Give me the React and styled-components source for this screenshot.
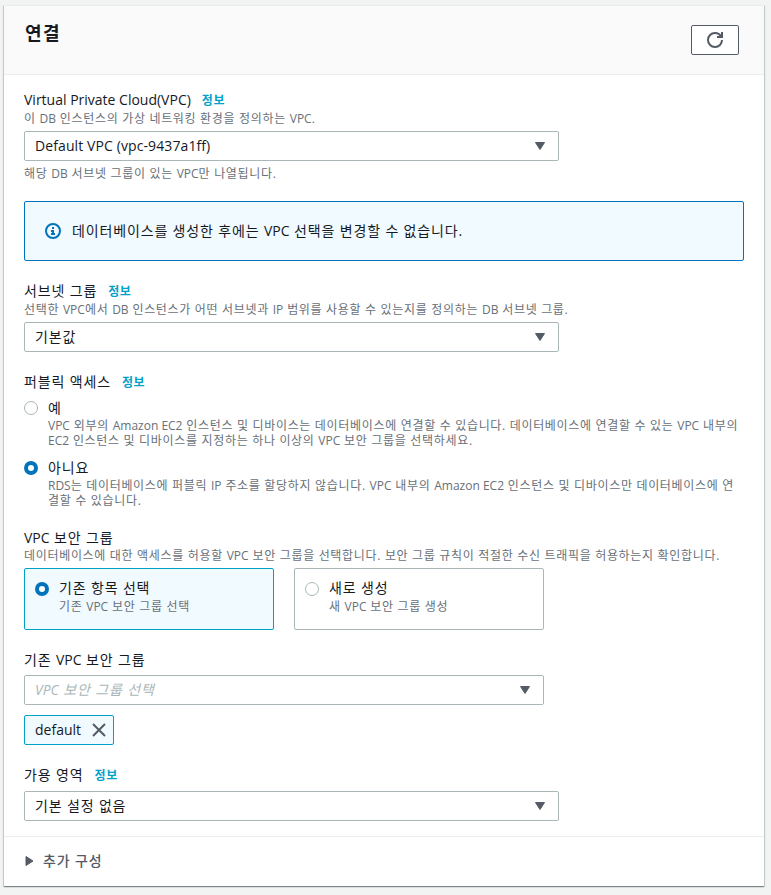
import React from 'react';
import styled, { createGlobalStyle } from 'styled-components';

const GlobalStyle = createGlobalStyle`
  * {
    box-sizing: border-box;
  }
  body {
    margin: 0;
    background: #f2f3f3;
    color: #16191f;
    font-family: 'Open Sans', 'Noto Sans CJK KR', sans-serif;
    font-size: 14px;
  }
`;

const Page = styled.main`
  padding: 5px 7px 9px 4px;
`;

const Panel = styled.section`
  width: 760px;
  height: 881px;
  background: #fff;
  border-top: 1px solid #eaeded;
  box-shadow: 0 1px 1px 0 rgba(0, 28, 36, 0.3), 1px 1px 1px 0 rgba(0, 28, 36, 0.15),
    -1px 1px 1px 0 rgba(0, 28, 36, 0.15);
`;

const PanelHeader = styled.header`
  display: flex;
  justify-content: space-between;
  height: 69px;
  padding: 15px 25px 0 21px;
  background: #fafafa;
  border-bottom: 1px solid #eaeded;
`;

const Title = styled.h2`
  margin: 0;
  font-size: 18px;
  line-height: 24px;
  font-weight: 700;
  letter-spacing: 1.5px;
`;

const RefreshButton = styled.button`
  display: flex;
  align-items: center;
  justify-content: center;
  width: 48px;
  height: 30px;
  margin-top: 4px;
  padding: 0;
  color: #545b64;
  background: #fff;
  border: 1px solid #545b64;
  border-radius: 2px;
`;

const Form = styled.div`
  display: flex;
  flex-direction: column;
  gap: 20px;
  height: 761px;
  padding: 15px 20px 0;
`;

const Field = styled.div`
  display: flex;
  flex-direction: column;
`;

const LabelRow = styled.div`
  display: flex;
  align-items: center;
  gap: 11px;
  height: 20px;
`;

const Ko = styled.span`
  letter-spacing: ${props => (props.$small ? '0.68px' : '0.85px')};
`;

const Label = styled.span`
  line-height: 20px;
  letter-spacing: ${props => props.$track || 'normal'};
  white-space: nowrap;
`;

const InfoLink = styled.a`
  padding-top: 2px;
  color: #00a1c9;
  font-size: 12px;
  line-height: 20px;
  font-weight: 700;
`;

const Hint = styled.div`
  color: #687078;
  font-size: 12px;
  line-height: ${props => props.$line || 17}px;
  margin-bottom: ${props => (props.$line ? 0 : '-1px')};
  white-space: nowrap;
`;

const SelectBox = styled.div`
  display: flex;
  align-items: center;
  justify-content: space-between;
  width: ${props => props.$width || 535}px;
  height: 30px;
  margin: ${props => props.$top || 5}px 0 ${props => props.$bottom || 0}px;
  padding: 0 12px 0 10px;
  color: ${props => (props.$placeholder ? '#aab7b8' : '#16191f')};
  font-style: ${props => (props.$placeholder ? 'italic' : 'normal')};
  background: #fff;
  border: 1px solid #aab7b8;
  border-radius: 2px;
`;

const Alert = styled.div`
  display: flex;
  align-items: center;
  gap: 11px;
  height: 60px;
  padding: 0 20px;
  background: #f1faff;
  border: 1px solid #0073bb;
  border-radius: 2px;
`;

const RadioList = styled.div`
  display: flex;
  flex-direction: column;
  gap: 10px;
  margin-top: 6px;
`;

const RadioRow = styled.div`
  display: flex;
  gap: 10px;
`;

const RadioDot = styled.span`
  flex: none;
  width: 14px;
  height: 14px;
  margin-top: ${props => props.$top || 3}px;
  background: #fff;
  border: ${props => (props.$checked ? '4px solid #0073bb' : '1px solid #aab7b8')};
  border-radius: 50%;
`;

const Tiles = styled.div`
  display: flex;
  gap: 20px;
  margin-top: 4px;
`;

const Tile = styled.div`
  display: flex;
  gap: 10px;
  width: 250px;
  height: 62px;
  padding: 9px 10px;
  background: ${props => (props.$checked ? '#f1faff' : '#fff')};
  border: 1px solid ${props => (props.$checked ? '#00a1c9' : '#aab7b8')};
  border-radius: 2px;
`;

const Token = styled.div`
  display: flex;
  align-items: center;
  justify-content: space-between;
  width: 90px;
  height: 30px;
  margin-top: 10px;
  padding: 0 6px 0 10px;
  color: #16191f;
  background: #f1faff;
  border: 1px solid #00a1c9;
  border-radius: 2px;
`;

const Expander = styled.div`
  display: flex;
  align-items: center;
  gap: 9px;
  height: 48px;
  padding-left: 21px;
  color: #545b64;
  font-weight: 500;
  border-top: 1px solid #eaeded;
`;

// Hangul runs are tracked a little wider than the Latin around them
function Text({ children, small }) {
  return children
    .split(/( ?[\uac00-\ud7a3][\uac00-\ud7a3 .]*)/)
    .filter(Boolean)
    .map((run, i) => (/[\uac00-\ud7a3]/.test(run) ? <Ko key={i} $small={small}>{run}</Ko> : run));
}

function Caret() {
  return (
    <svg width="12" height="10" viewBox="0 0 12 10">
      <path d="M1.5 1.5h9L6 8.5z" fill="#545b64" stroke="#545b64" strokeLinejoin="round" />
    </svg>
  );
}

function FieldLabel({ text, info }) {
  return (
    <LabelRow>
      <Label><Text>{text}</Text></Label>
      {info ? <InfoLink><Text small>정보</Text></InfoLink> : null}
    </LabelRow>
  );
}

function Select({ value, track, ...rest }) {
  return (
    <SelectBox {...rest}>
      <Label $track={track}><Text>{value}</Text></Label>
      <Caret />
    </SelectBox>
  );
}

function Radio({ label, lines, line, checked, dotTop }) {
  return (
    <>
      <RadioDot $checked={checked} $top={dotTop} />
      <div>
        <LabelRow><Label><Text>{label}</Text></Label></LabelRow>
        {lines.map(text => (
          <Hint key={text} $line={line}><Text small>{text}</Text></Hint>
        ))}
      </div>
    </>
  );
}

const accessOptions = [
  {
    label: '예',
    lines: [
      'VPC 외부의 Amazon EC2 인스턴스 및 디바이스는 데이터베이스에 연결할 수 있습니다. 데이터베이스에 연결할 수 있는 VPC 내부의',
      'EC2 인스턴스 및 디바이스를 지정하는 하나 이상의 VPC 보안 그룹을 선택하세요.',
    ],
  },
  {
    label: '아니요',
    checked: true,
    lines: [
      'RDS는 데이터베이스에 퍼블릭 IP 주소를 할당하지 않습니다. VPC 내부의 Amazon EC2 인스턴스 및 디바이스만 데이터베이스에 연',
      '결할 수 있습니다.',
    ],
  },
];

const groupOptions = [
  { label: '기존 항목 선택', lines: ['기존 VPC 보안 그룹 선택'], checked: true },
  { label: '새로 생성', lines: ['새 VPC 보안 그룹 생성'] },
];

export default function App() {
  return (
    <Page>
      <GlobalStyle />
      <Panel>
        <PanelHeader>
          <Title>연결</Title>
          <RefreshButton aria-label="refresh">
            <svg width="16" height="16" viewBox="0 0 16 16" fill="none" stroke="currentColor" strokeWidth="2">
              <path d="M10 5h5V0" />
              <path d="M15 8a6.957 6.957 0 0 1-7 7 6.957 6.957 0 0 1-7-7 6.957 6.957 0 0 1 7-7 6.87 6.87 0 0 1 6.3 4" />
            </svg>
          </RefreshButton>
        </PanelHeader>
        <Form>
          <Field>
            <FieldLabel text="Virtual Private Cloud(VPC)" info />
            <Hint><Text small>이 DB 인스턴스의 가상 네트워킹 환경을 정의하는 VPC.</Text></Hint>
            <Select value="Default VPC (vpc-9437a1ff)" track="0.1px" $bottom={4} />
            <Hint><Text small>해당 DB 서브넷 그룹이 있는 VPC만 나열됩니다.</Text></Hint>
          </Field>
          <Alert>
            <svg width="16" height="16" viewBox="0 0 16 16" fill="none" stroke="#0073bb" strokeWidth="2">
              <circle cx="8" cy="8" r="7" />
              <path d="M8 11V8H6M10 11H6M8 6V4" />
            </svg>
            <Label><Text>데이터베이스를 생성한 후에는 VPC 선택을 변경할 수 없습니다.</Text></Label>
          </Alert>
          <Field>
            <FieldLabel text="서브넷 그룹" info />
            <Hint><Text small>선택한 VPC에서 DB 인스턴스가 어떤 서브넷과 IP 범위를 사용할 수 있는지를 정의하는 DB 서브넷 그룹.</Text></Hint>
            <Select value="기본값" />
          </Field>
          <Field>
            <FieldLabel text="퍼블릭 액세스" info />
            <RadioList>
              {accessOptions.map(option => (
                <RadioRow key={option.label}><Radio {...option} line={15} /></RadioRow>
              ))}
            </RadioList>
          </Field>
          <Field>
            <FieldLabel text="VPC 보안 그룹" />
            <Hint $line={16}><Text small>데이터베이스에 대한 액세스를 허용할 VPC 보안 그룹을 선택합니다. 보안 그룹 규칙이 적절한 수신 트래픽을 허용하는지 확인합니다.</Text></Hint>
            <Tiles>
              {groupOptions.map(option => (
                <Tile key={option.label} $checked={option.checked}>
                  <Radio {...option} line={17} dotTop={4} />
                </Tile>
              ))}
            </Tiles>
          </Field>
          <Field>
            <FieldLabel text="기존 VPC 보안 그룹" />
            <Select value="VPC 보안 그룹 선택" $width={520} $placeholder />
            <Token>
              <Label>default</Label>
              <svg width="16" height="16" viewBox="0 0 16 16" stroke="#545b64" strokeWidth="2">
                <path d="M2 2l12 12M14 2L2 14" />
              </svg>
            </Token>
          </Field>
          <Field>
            <FieldLabel text="가용 영역" info />
            <Select value="기본 설정 없음" $top={6} />
          </Field>
        </Form>
        <Expander>
          <svg width="9" height="12" viewBox="0 0 9 12">
            <path d="M1 1.5v9L8 6z" fill="#545b64" stroke="#545b64" strokeLinejoin="round" />
          </svg>
          <Label><Text>추가 구성</Text></Label>
        </Expander>
      </Panel>
    </Page>
  );
}
